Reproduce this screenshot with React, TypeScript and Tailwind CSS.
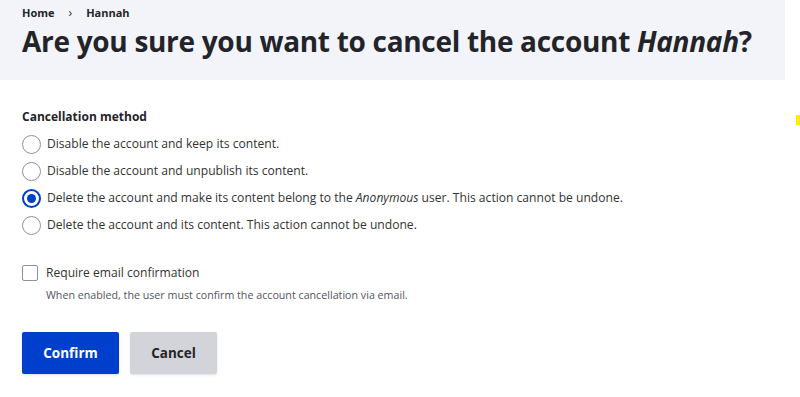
import React from 'react'

const OPTIONS: { key: string; label: React.ReactNode }[] = [
  { key: 'block', label: 'Disable the account and keep its content.' },
  { key: 'unpublish', label: 'Disable the account and unpublish its content.' },
  {
    key: 'reassign',
    label: (
      <>
        Delete the account and make its content belong to the <em>Anonymous</em> user. This action cannot be undone.
      </>
    ),
  },
  { key: 'delete', label: 'Delete the account and its content. This action cannot be undone.' },
]

function Radio({ checked }: { checked: boolean }) {
  return checked ? (
    <span className="w-[19px] h-[19px] rounded-full border-[2px] border-[#003ecc] flex items-center justify-center flex-shrink-0">
      <span className="w-[9px] h-[9px] rounded-full bg-[#003ecc]" />
    </span>
  ) : (
    <span className="w-[19px] h-[19px] rounded-full border border-[#8e929c] bg-white flex-shrink-0" />
  )
}

export default function App() {
  const selected = 'reassign'
  return (
    <div className="relative w-full h-[397px] bg-white overflow-hidden text-[#232429]" style={{ fontFamily: '"Open Sans", "Noto Sans", sans-serif' }}>
      {/* En-tête */}
      <div className="w-[785px] h-[80px] bg-[#f3f4f9] px-[22px] pt-[3px]">
        <nav className="flex items-center gap-[14px] text-[11px] font-bold h-[20px]">
          <span>Home</span>
          <span className="font-normal text-[12px]">›</span>
          <span>Hannah</span>
        </nav>
        <h1 className="text-[28px] font-bold leading-[36px] tracking-[-0.3px]">
          Are you sure you want to cancel the account <em>Hannah</em>?
        </h1>
      </div>

      <form className="px-[22px] pt-[27px]">
        <div className="text-[12px] font-bold leading-[20px]">Cancellation method</div>
        <div className="flex flex-col mt-[4px]">
          {OPTIONS.map(o => (
            <label key={o.key} className="flex items-center gap-[6px] h-[27px] text-[12.1px] text-[#333]">
              <Radio checked={o.key === selected} />
              <span>{o.label}</span>
            </label>
          ))}
        </div>

        <div className="mt-[24px]">
          <label className="flex items-center gap-[8px] h-[20px] text-[12.1px] text-[#333]">
            <span className="w-[16px] h-[16px] border border-[#8e929c] rounded-[2px] bg-white flex-shrink-0" />
            <span>Require email confirmation</span>
          </label>
          <p className="ml-[24px] mt-[4px] text-[10.7px] text-[#545560] leading-[16px]">
            When enabled, the user must confirm the account cancellation via email.
          </p>
        </div>

        <div className="flex gap-[11px] mt-[29px]">
          <button type="button" className="w-[97px] h-[42px] rounded-[2px] bg-[#003ecc] text-white text-[13.5px] font-bold shadow-sm">
            Confirm
          </button>
          <button type="button" className="w-[87px] h-[42px] rounded-[2px] bg-[#d3d4d9] text-[#232429] text-[13.5px] font-bold shadow-sm">
            Cancel
          </button>
        </div>
      </form>

      <span className="absolute right-0 top-[115px] w-[4px] h-[10px] bg-[#ffee00]" />
    </div>
  )
}
